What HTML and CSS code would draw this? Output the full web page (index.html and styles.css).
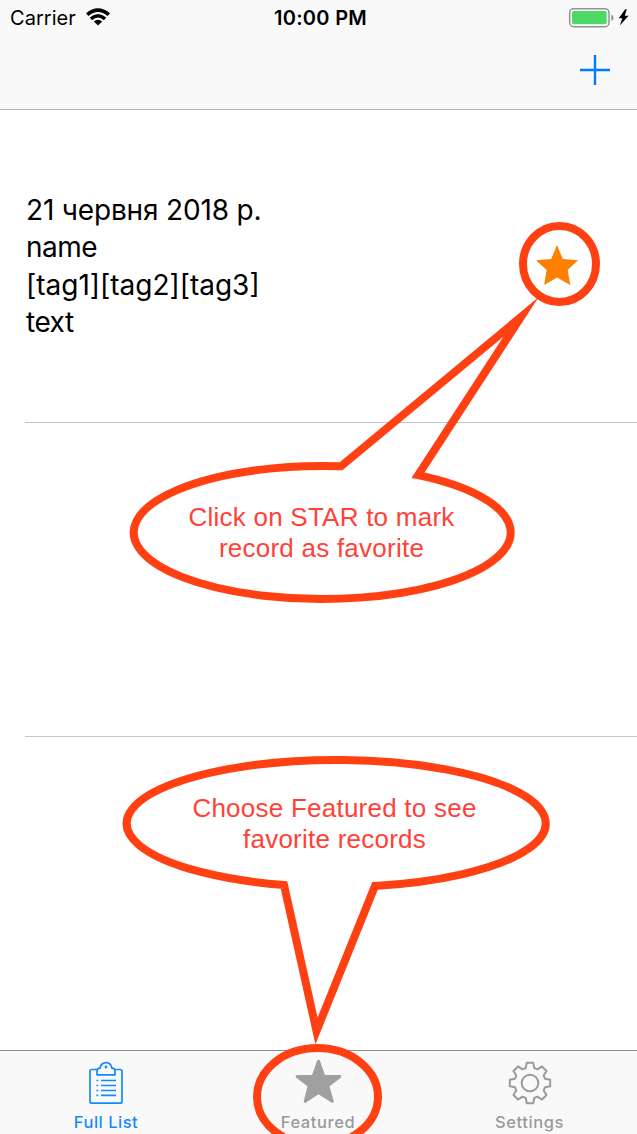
FILE: index.html
```html
<!DOCTYPE html>
<html lang="uk">
<head>
<meta charset="utf-8">
<title>Full List</title>
<link rel="stylesheet" href="styles.css">
</head>
<body>
<div class="screen">
  <header class="header">
    <div class="status">
      <div class="carrier">
        <span class="carrier-name">Carrier</span>
        <svg class="wifi" width="24" height="18" viewBox="0 0 24 18"><g fill="none" stroke="#000"><path d="M1.2 6.6Q12-2.5 22.8 6.6" stroke-width="3.7"/><path d="M4.9 10.9Q12 4.6 19.1 10.9" stroke-width="3.5"/></g><path d="M7.8 13.6Q12 10 16.2 13.6L12 17.6Z"/></svg>
      </div>
      <div class="time">10:00 PM</div>
      <div class="battery">
        <svg width="62" height="20" viewBox="0 0 62 20"><rect x="1.7" y=".7" width="39.3" height="18" rx="4" fill="#fff" stroke="#929292" stroke-width="1.5"/><rect x="4" y="3" width="34.7" height="13.3" rx="1.8" fill="#4cd964"/><path d="M43.3 6.5Q45.6 7.3 45.6 9.7Q45.6 12.1 43.3 12.9Z" fill="#929292"/><path d="M57.2 1.2L50.8 10.2H54.4L51.8 17.4L60.6 7.7H56.7L58.8 1.2Z"/></svg>
      </div>
    </div>
    <div class="nav">
      <svg width="30" height="30" viewBox="0 0 30 30"><path d="M0 15H30M15 0V30" stroke="#007aff" stroke-width="2.4"/></svg>
    </div>
  </header>
  <main class="list">
    <section class="row">
      <div class="record">
        <div class="date">21 червня 2018 р.</div>
        <div class="name">name</div>
        <div class="tags">[tag1][tag2][tag3]</div>
        <div class="text">text</div>
      </div>
      <svg class="favorite" width="42" height="40" viewBox="0 0 42 40"><path d="M21 0L26.8 14L42 15.2L31.7 25L34.3 40L21 32.6L8.2 40L10.6 25L0 15.2L15.2 14Z" fill="#ff8000"/></svg>
    </section>
    <section class="row"></section>
    <section class="row"></section>
  </main>
  <nav class="tabs">
    <div class="tab active">
      <svg width="44" height="44" viewBox="0 0 44 44" fill="none" stroke="#158aff" stroke-width="1.7"><path d="M13 8.5H8Q6 8.5 6 10.5V40.2Q6 42.2 8 42.2H36Q38 42.2 38 40.2V10.5Q38 8.5 36 8.5H31"/><path d="M13 13.8V10Q13 7.5 16 7.2Q17.2 1.7 22 1.7Q26.8 1.7 28 7.2Q31 7.5 31 10V13.8Z" stroke-linejoin="round"/><circle cx="22" cy="6" r="1.4" fill="#158aff" stroke="none"/><path d="M17 19.5H32M17 24.5H32M17 29.5H32M17 34.3H32M12.4 19.5H14.2M12.4 24.5H14.2M12.4 29.5H14.2M12.4 34.3H14.2"/></svg>
      <span>Full List</span>
    </div>
    <div class="tab featured">
      <svg width="48" height="44" viewBox="0 0 48 44"><path d="M24.5 2.2L29.9 17.6H45.8L33.8 26.8L38.3 42.3L24.5 33.4L11.2 42.3L15.2 26.8L3.2 17.6H19.1Z" fill="#a0a0a0" stroke="#a0a0a0" stroke-width="3" stroke-linejoin="round"/></svg>
      <span>Featured</span>
    </div>
    <div class="tab settings">
      <svg width="44" height="44" viewBox="-22 -22 44 44" fill="none" stroke="#9b9b9b" stroke-width="2" stroke-linejoin="round"><path d="M-4.3-15L-3.2-20.2H3.2L4.3-15L7.57-13.65L12.02-16.55L16.55-12.02L13.65-7.57L15-4.3L20.2-3.2V3.2L15 4.3L13.65 7.57L16.55 12.02L12.02 16.55L7.57 13.65L4.3 15L3.2 20.2H-3.2L-4.3 15L-7.57 13.65L-12.02 16.55L-16.55 12.02L-13.65 7.57L-15 4.3L-20.2 3.2V-3.2L-15-4.3L-13.65-7.57L-16.55-12.02L-12.02-16.55L-7.57-13.65Z"/><circle r="8.3"/></svg>
      <span>Settings</span>
    </div>
  </nav>
  <svg class="outlines" width="637" height="1134" viewBox="0 0 637 1134">
    <path d="M341 466.3A188.5 66.5 0 1 0 418 475.2L521 317Z"/>
    <ellipse cx="559.5" cy="264" rx="36.5" ry="38"/>
    <path d="M284 885A209.5 63.5 0 1 1 375 885.9L316.5 1031Z"/>
    <ellipse cx="317.5" cy="1096.7" rx="60.5" ry="48.7"/>
  </svg>
  <p class="tip tip-star">Click on STAR to mark<br>record as favorite</p>
  <p class="tip tip-featured">Choose Featured to see<br>favorite records</p>
</div>
</body>
</html>
```
FILE: styles.css
```css
* { box-sizing: border-box; }
body { margin: 0; font-family: Inter, "Liberation Sans", sans-serif; color: #000; }
.screen { position: relative; display: flex; flex-direction: column; width: 637px; height: 1134px; overflow: hidden; background: #fff; }
.header { height: 110px; flex: none; background: #f9f9f9; border-bottom: 1px solid #b2b2b2; }
.status { display: grid; grid-template-columns: 1fr auto 1fr; align-items: center; height: 36px; padding: 0 7px 0 10px; }
.carrier { display: flex; align-items: center; gap: 10px; font-size: 20px; letter-spacing: 0.05px; }
.wifi { margin-top: -2px; }
.time { font-size: 20px; font-weight: 600; letter-spacing: 0.3px; padding-left: 1px; }
.battery { display: flex; justify-content: flex-end; }
.nav { display: flex; justify-content: flex-end; padding: 19px 27px 0 0; }
.list { flex: 1; }
.row { display: flex; justify-content: space-between; align-items: flex-start; height: 313px; margin-left: 25px; padding: 81.5px 59px 0 1px; border-bottom: 1px solid #c6c6c6; }
.row + .row { height: 314px; }
.record { font-size: 28px; line-height: 37.5px; white-space: nowrap; }
.date { letter-spacing: -0.17px; }
.name, .text { letter-spacing: -0.5px; }
.favorite { margin-top: 53.5px; }
.tabs { display: grid; grid-template-columns: 212px 212px 213px; height: 84px; flex: none; margin-top: -1px; border-top: 1px solid #8c8c8c; background: #f9f9f9; }
.tab { display: flex; flex-direction: column; align-items: center; padding-top: 10px; color: #999; font-size: 16.5px; font-weight: 500; line-height: 20px; letter-spacing: 0.6px; }
.tab span { margin-top: 7px; }
.active { color: #158aff; }
.active span { letter-spacing: 0.5px; }
.featured svg { margin-top: -2px; margin-bottom: 2px; }
.settings { padding-right: 2px; }
.outlines { position: absolute; inset: 0; fill: none; stroke: #ff4013; stroke-width: 8; stroke-miterlimit: 10; pointer-events: none; }
.tip { position: absolute; margin: 0; color: #ff4238; font: 26px/31px "Liberation Sans", Arial, sans-serif; letter-spacing: 0.24px; text-align: center; white-space: nowrap; }
.tip-star { left: 188px; width: 267px; top: 502px; }
.tip-featured { left: 192px; width: 285px; top: 793px; }
```
